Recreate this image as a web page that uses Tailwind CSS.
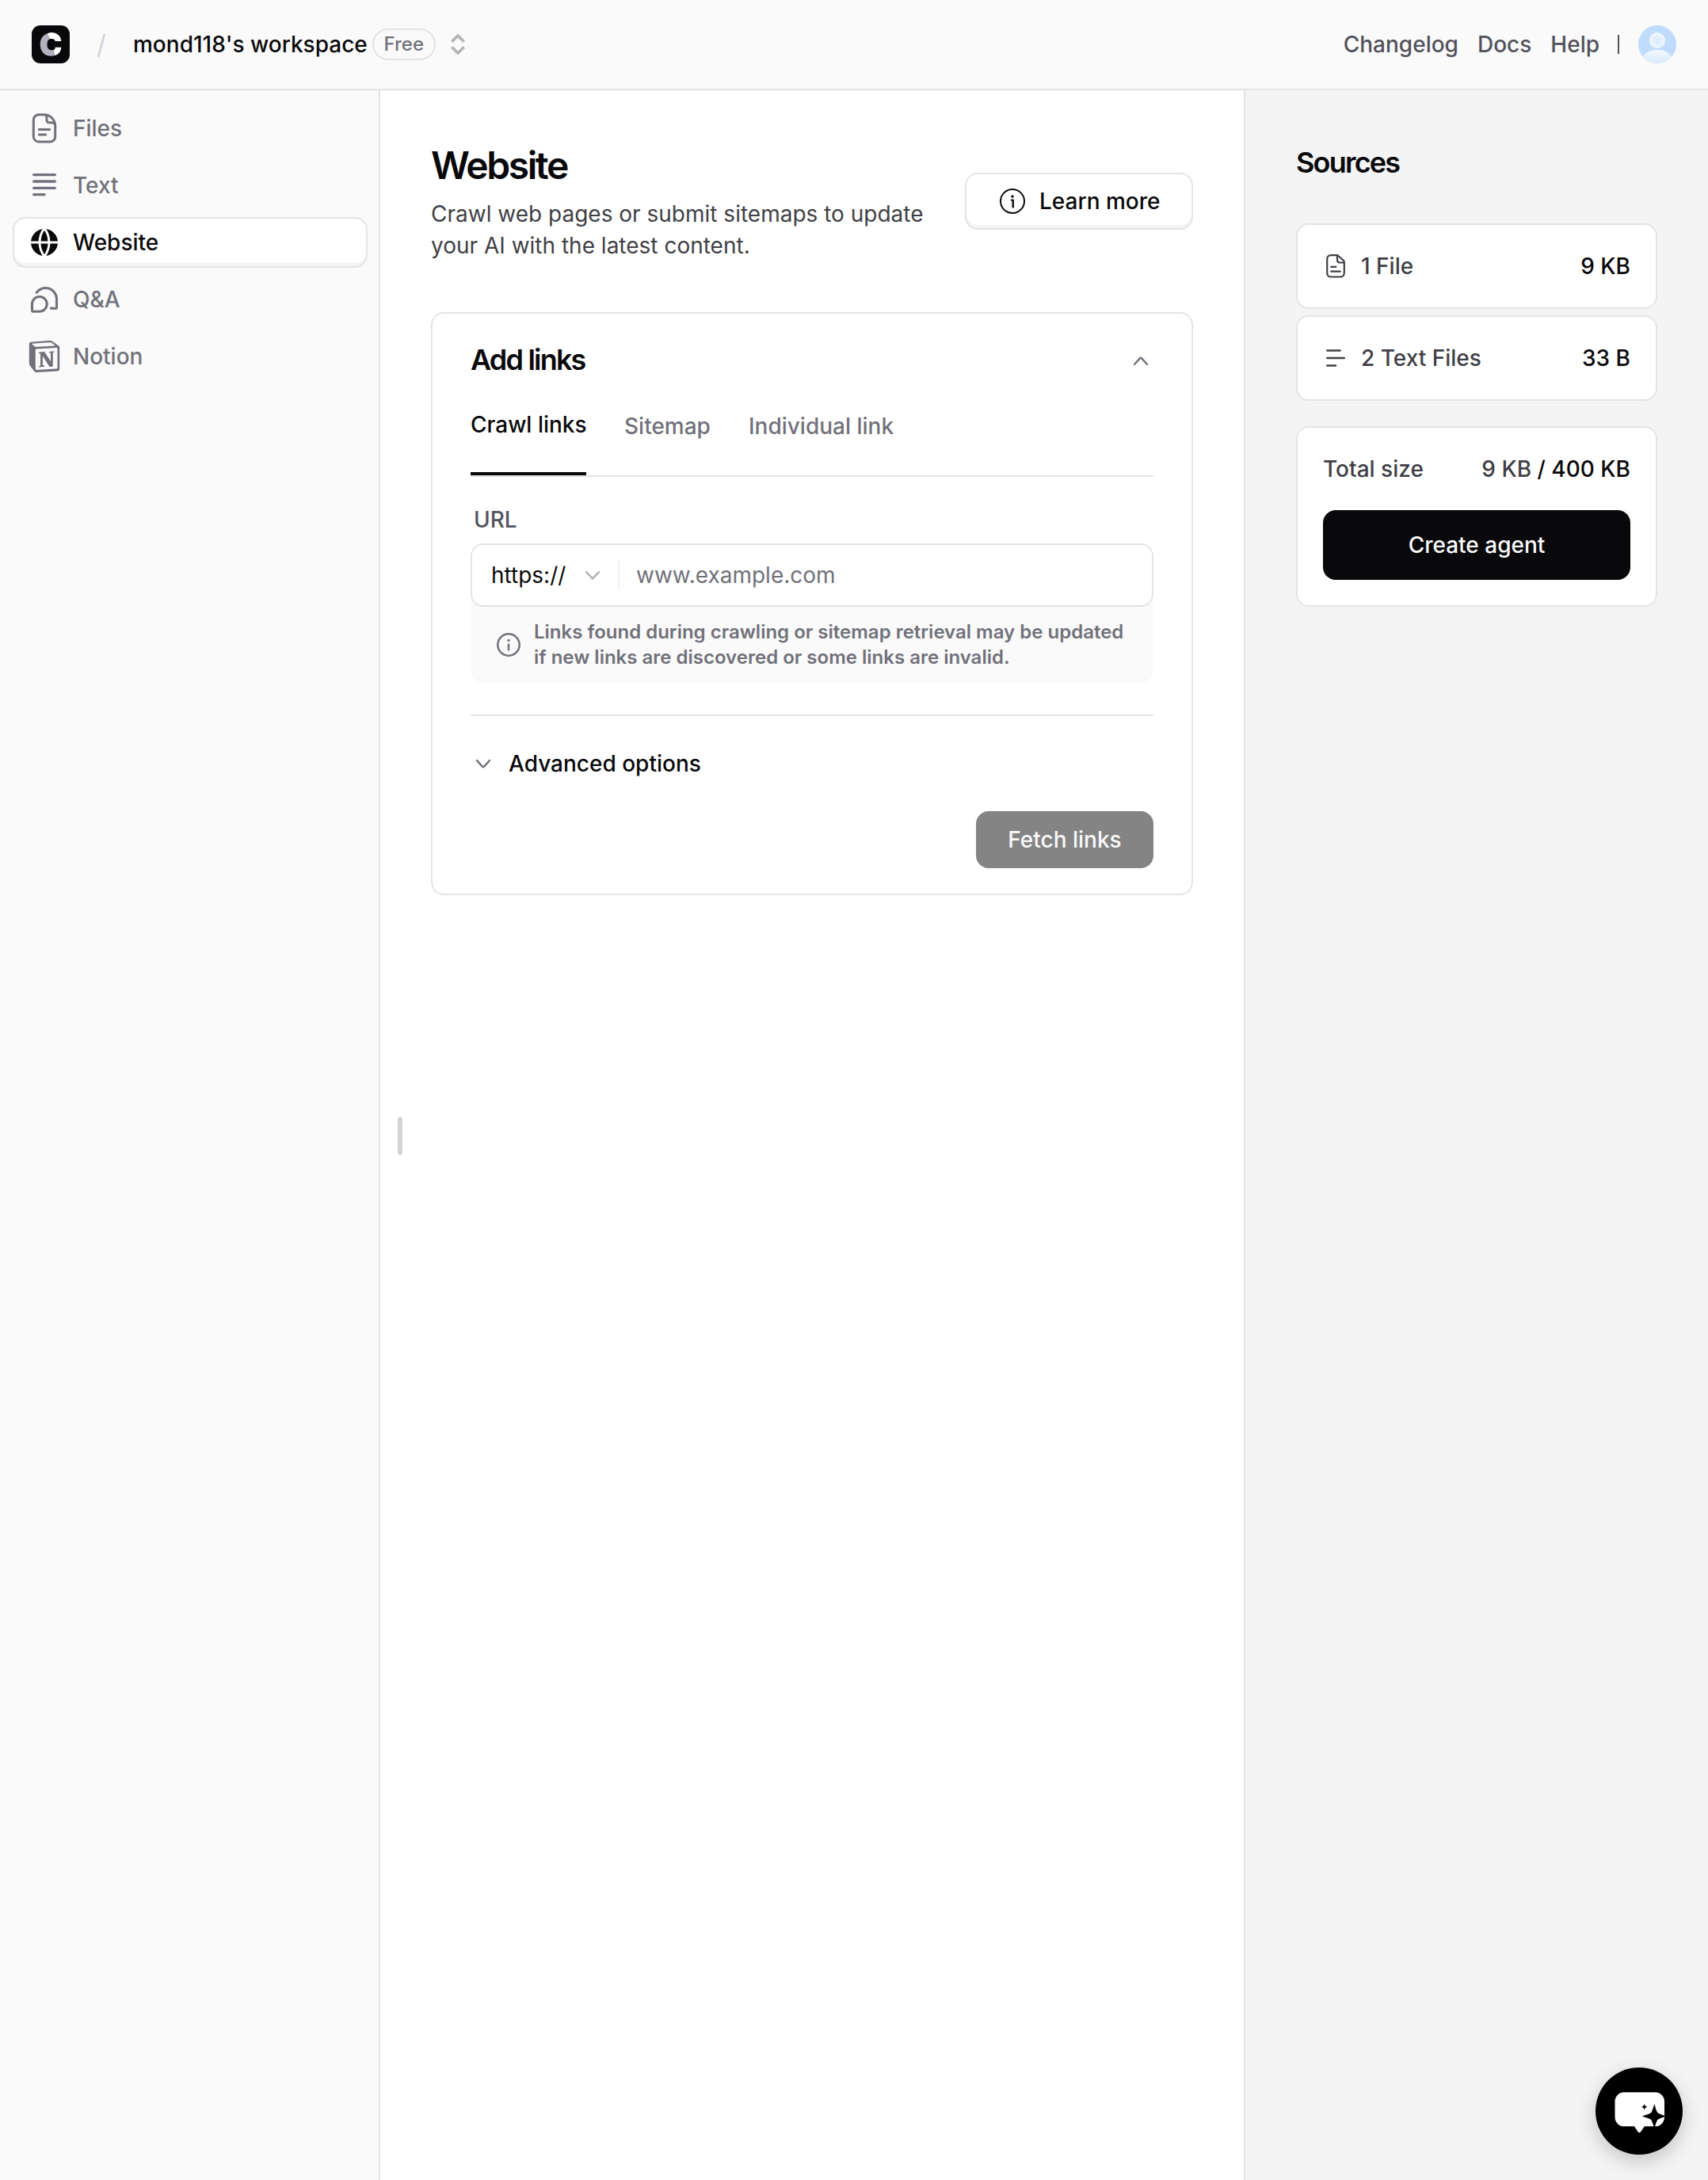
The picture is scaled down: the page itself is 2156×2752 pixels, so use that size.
<!DOCTYPE html>
<html lang="en">
<head>
<meta charset="utf-8">
<title>Website sources</title>
<script src="https://cdn.jsdelivr.net/npm/@tailwindcss/browser@4"></script>
</head>
<body class="flex min-h-screen flex-col bg-white font-['Inter',sans-serif] text-[28px] leading-[40px] font-medium text-[#09090b]">

<header class="flex h-[114px] items-center justify-between border-b-2 border-[#e4e4e5] bg-[#fafafa] px-10">
  <div class="flex items-center">
    <svg class="size-12" viewBox="0 0 48 48">
      <rect width="48" height="48" rx="11" fill="#09090b"/>
      <path fill="#fff" d="M37.3 20C36.8 13 31.8 9 25 9C23 9 21 9.6 19.5 10.5L23 17.2C26.5 16.4 29.3 17.3 29.7 20ZM37.3 27.7H29.7C29.6 29.8 28.8 30.8 27.3 31.2L29 38C34 37 37 33 37.3 27.7Z"/>
      <path fill="#b4b0bd" d="M19.5 10.5C13 13 10.7 18 10.7 24C10.7 33 16 38.7 24.5 38.7C26 38.7 27.6 38.5 29 38L27.3 31.2C22 32 19.5 29.5 19.5 24C19.5 20 20.5 18 23 17.2Z"/>
    </svg>
    <span class="ml-[34px] w-[46px] text-[33px] font-normal text-[#d4d4d8]">/</span>
    <span class="whitespace-nowrap">mond118's workspace</span>
    <span class="ml-1.5 flex h-10 w-20 items-center justify-center rounded-full border-2 border-[#e4e4e5] text-[24px] text-[#71717a]">Free</span>
    <svg class="ml-3 size-8" viewBox="0 0 32 32" fill="none" stroke="#b5b5b9" stroke-width="3.6"><path d="M8.3 12.6L16 5L23.7 12.6M8.3 19.4L16 27L23.7 19.4"/></svg>
  </div>
  <nav class="flex items-center text-[#52525b]">
    <div class="mr-[23px] flex gap-6"><a>Changelog</a><a>Docs</a><a>Help</a></div>
    <span class="mr-6 h-6 w-0.5 bg-[#52525b]"></span>
    <svg class="size-12" viewBox="0 0 48 48">
      <defs>
        <clipPath id="av"><circle cx="24" cy="24" r="24"/></clipPath>
        <linearGradient id="avb" x1="0" y1="0" x2="0" y2="1"><stop offset="0" stop-color="#f3faff"/><stop offset="1" stop-color="#c6dbfa"/></linearGradient>
        <radialGradient id="avh"><stop offset=".4" stop-color="#dfeefe"/><stop offset="1" stop-color="#f2f9ff"/></radialGradient>
      </defs>
      <g clip-path="url(#av)"><rect width="48" height="48" fill="#bfdbfe"/><ellipse cx="24" cy="46" rx="20" ry="15.3" fill="url(#avb)"/><circle cx="24" cy="19" r="10" fill="url(#avh)"/></g>
    </svg>
  </nav>
</header>

<div class="flex flex-1">
  <aside class="flex w-[480px] flex-col gap-2 border-r-2 border-[#e4e4e5] bg-[#fafafa] p-4 pr-3.5 text-[#71717a]">
    <a class="flex h-16 items-center gap-4 px-5">
      <svg class="size-10" viewBox="0 0 40 40" fill="none" stroke="currentColor" stroke-width="3" stroke-linecap="round" stroke-linejoin="round"><path d="M13 2.7H20C27.5 2.7 33.7 9.5 33.7 17V30.5A6.5 6.5 0 0 1 27.2 37H13A6.7 6.7 0 0 1 6.3 30.3V9.4A6.7 6.7 0 0 1 13 2.7ZM21.5 3.2C22.9 4.3 23 5.8 23 7.5V10A2.8 2.8 0 0 0 25.8 12.8H28C30.5 12.8 32.3 13.2 33.2 14.8M13.3 21.4H26.7M13.3 28H21.7"/></svg>
      Files
    </a>
    <a class="flex h-16 items-center gap-4 px-5">
      <svg class="size-10" viewBox="0 0 40 40" fill="none" stroke="currentColor" stroke-width="3.3" stroke-linecap="round"><path d="M6.7 6.7H33.3M6.7 15H33.3M6.7 23.4H33.3M6.7 31.7H20"/></svg>
      Text
    </a>
    <a class="flex h-16 items-center gap-4 rounded-2xl border-2 border-[#e4e4e5] bg-white px-[18px] text-[#09090b] shadow-[inset_0_-4px_0_0_#f4f4f5]">
      <svg class="size-10" viewBox="0 0 40 40" fill="none"><circle cx="20" cy="20" r="17" fill="#09090b"/><path d="M20 2.2C12 13 12 27 20 37.8C28 27 28 13 20 2.2ZM2 20H38" stroke="#fff" stroke-width="2.9"/></svg>
      Website
    </a>
    <a class="flex h-16 items-center gap-4 px-5">
      <svg class="size-10" viewBox="0 0 40 40" fill="none" stroke="currentColor" stroke-width="3.1" stroke-linecap="round" stroke-linejoin="round"><path d="M13.9 16.5A9.3 9.3 0 0 1 13.9 35.2H6A1.5 1.5 0 0 1 4.5 33.7V25.9A9.4 9.4 0 0 1 13.9 16.5ZM10.2 11.3A14 14 0 0 1 35.5 18.6V30A1.5 1.5 0 0 1 34 31.5L28.4 31.1"/></svg>
      Q&amp;A
    </a>
    <a class="flex h-16 items-center gap-4 px-5">
      <svg class="size-10" viewBox="0 0 24 24" fill="currentColor"><path d="M4.459 4.208c.746.606 1.026.56 2.428.466l13.215-.793c.28 0 .047-.28-.046-.326L17.86 1.968c-.42-.326-.981-.7-2.055-.607L3.01 2.295c-.466.046-.56.28-.374.466zm.793 3.08v13.904c0 .747.373 1.027 1.214.98l14.523-.84c.841-.046.935-.56.935-1.167V6.354c0-.606-.233-.933-.748-.887l-15.177.887c-.56.047-.747.327-.747.933zm14.337.745c.093.42 0 .84-.42.888l-.7.14v10.264c-.608.327-1.168.514-1.635.514-.748 0-.935-.234-1.495-.933l-4.577-7.186v6.952L12.21 19s0 .84-1.168.84l-3.222.186c-.093-.186 0-.653.327-.746l.84-.233V9.854L7.822 9.76c-.094-.42.14-1.026.793-1.073l3.456-.233 4.764 7.279v-6.44l-1.215-.139c-.093-.514.28-.887.747-.933zM1.936 1.035l13.31-.98c1.634-.14 2.055-.047 3.082.7l4.249 2.986c.7.513.934.653.934 1.213v16.378c0 1.026-.373 1.634-1.68 1.726l-15.458.934c-.98.047-1.448-.093-1.962-.747l-3.129-4.06c-.56-.747-.793-1.306-.793-1.96V2.667c0-.839.374-1.54 1.447-1.632z"/></svg>
      Notion
    </a>
  </aside>

  <main class="relative w-[1092px] border-r-2 border-[#e4e4e5] p-16">
    <!-- sidebar resize handle -->
    <span class="absolute top-[1296px] left-[22px] h-12 w-1.5 rounded-full bg-[#d4d4d8]"></span>

    <div class="flex items-center justify-between">
      <div>
        <h1 class="text-[48px] leading-[62px] font-semibold tracking-tighter">Website</h1>
        <p class="mt-2.5 w-[640px] font-normal text-[#3f3f46]">Crawl web pages or submit sitemaps to update your AI with the latest content.</p>
      </div>
      <button class="flex h-[72px] w-[288px] items-center gap-4 rounded-2xl border-2 border-[#e4e4e5] bg-white pl-10 whitespace-nowrap shadow-[inset_0_-4px_0_0_#f4f4f5]">
        <svg class="size-9" viewBox="0 0 36 36" fill="none" stroke="currentColor" stroke-width="2"><circle cx="18" cy="18" r="15"/><circle cx="18" cy="12" r="1.8" fill="currentColor" stroke="none"/><path d="M17 16.6H18.7V25.4" stroke-width="2.4" stroke-linecap="round" stroke-linejoin="round"/></svg>
        Learn more
      </button>
    </div>

    <section class="mt-16 flex flex-col rounded-2xl border-2 border-[#e4e4e5] px-12 pb-8">
      <div class="flex h-20 items-end justify-between">
        <h2 class="text-[36px] leading-[44px] font-semibold tracking-tighter">Add links</h2>
        <svg class="mb-1 size-8" viewBox="0 0 32 32" fill="none" stroke="#71717a" stroke-width="2.4" stroke-linecap="round"><path d="M8 20L14.8 12.4Q16 11.1 17.2 12.4L24 20"/></svg>
      </div>
      <div class="flex h-[126px] gap-12 border-b-2 border-[#e4e4e5] text-[#71717a]">
        <a class="flex w-[146px] items-center border-b-4 border-[#09090b] whitespace-nowrap text-[#09090b]">Crawl links</a>
        <a class="flex items-center">Sitemap</a>
        <a class="flex items-center">Individual link</a>
      </div>
      <label class="mt-[34px] pl-1 text-[#52525b]">URL</label>
      <div class="relative mt-2.5 flex h-20 items-center rounded-2xl border-2 border-[#e4e4e5] bg-white pl-6 font-normal">
        <span class="w-[112px]">https://</span>
        <svg class="size-8" viewBox="0 0 32 32" fill="none" stroke="#b5b5b9" stroke-width="2.6" stroke-linecap="round"><path d="M8 12.2L16 20.4L24 12.2"/></svg>
        <span class="ml-4 h-[38px] w-0.5 bg-[#f0f0f1]"></span>
        <input class="min-w-0 flex-1 bg-transparent pl-[21px] outline-none placeholder:text-[#71717a]" placeholder="www.example.com">
      </div>
      <div class="-mt-4 flex gap-3.5 rounded-2xl bg-[#fafafa] px-[30px] pt-8 pb-4 text-[24px] leading-8 font-semibold text-[#71717a]">
        <svg class="mt-3.5 size-9 shrink-0" viewBox="0 0 36 36" fill="none" stroke="currentColor" stroke-width="2.5"><circle cx="18" cy="18" r="13.7"/><circle cx="18" cy="12.4" r="1.7" fill="currentColor" stroke="none"/><path d="M18 17.4V24.2" stroke-linecap="round"/></svg>
        <p class="w-[750px]">Links found during crawling or sitemap retrieval may be updated if new links are discovered or some links are invalid.</p>
      </div>
      <div class="mt-10 h-0.5 bg-[#e4e4e5]"></div>
      <div class="mt-10 flex items-center gap-4">
        <svg class="size-8" viewBox="0 0 32 32" fill="none" stroke="#71717a" stroke-width="2.4" stroke-linecap="round"><path d="M8 12L14.8 19.6Q16 20.9 17.2 19.6L24 12"/></svg>
        Advanced options
      </div>
      <button class="mt-10 h-[72px] w-[224px] self-end rounded-2xl bg-[#848484] text-[#fafafa]">Fetch links</button>
    </section>
  </main>

  <aside class="flex-1 bg-[#f4f4f4] p-16 text-[#3f3f46]">
    <h2 class="text-[36px] leading-[54px] font-semibold tracking-tighter text-[#09090b]">Sources</h2>
    <div class="mt-[50px] flex h-[108px] items-center gap-4 rounded-2xl border-2 border-[#e4e4e5] bg-white px-8">
      <svg class="size-8" viewBox="0 0 32 32" fill="none" stroke="currentColor" stroke-width="2.2" stroke-linecap="round" stroke-linejoin="round"><path d="M10.5 2.2H17.6Q18.6 2.2 19.4 3L26 9Q26.8 9.8 26.8 11V24C26.8 28 25.5 29.5 21.5 29.5H10.5C6.5 29.5 5.2 28 5.2 24V7.7C5.2 3.7 6.5 2.2 10.5 2.2ZM18 3V8C18 10.5 19 11.5 21.5 11.5H26.3M10.2 16.8H16.4M10.2 22.6H21.8"/></svg>
      <span class="flex-1">1 File</span>
      <span class="text-[#09090b]">9 KB</span>
    </div>
    <div class="mt-2 flex h-[108px] items-center gap-4 rounded-2xl border-2 border-[#e4e4e5] bg-white px-8">
      <svg class="size-8" viewBox="0 0 32 32" fill="none" stroke="currentColor" stroke-width="2.5" stroke-linecap="round"><path d="M5.3 6.6H21.6M5.3 16H26.8M5.3 25.4H16"/></svg>
      <span class="flex-1">2 Text Files</span>
      <span class="text-[#09090b]">33 B</span>
    </div>
    <div class="mt-8 rounded-2xl border-2 border-[#e4e4e5] bg-white p-8">
      <div class="flex justify-between"><span>Total size</span><span class="text-[#09090b]"><span class="text-[#3f3f46]">9 KB</span> / 400 KB</span></div>
      <button class="mt-8 h-[88px] w-full rounded-2xl bg-[#09090b] text-[#fafafa]">Create agent</button>
    </div>
  </aside>
</div>

<button class="fixed right-8 bottom-8 size-[110px] rounded-full bg-black shadow-[0_8px_24px_rgba(0,0,0,0.2)]">
  <svg class="size-[110px]" viewBox="0 0 110 110"><path fill="#fff" d="M36 31.3H75.5A11.5 11.5 0 0 1 87 42.8V62.8A11.5 11.5 0 0 1 75.5 74.3H61.8L57 81.2Q55.3 83.2 53.6 81.2L49 74.3H36A11.5 11.5 0 0 1 24.5 62.8V42.8A11.5 11.5 0 0 1 36 31.3Z"/><path d="M74.3 46C76 51 76.5 54 78.3 57C81 59 84 59.8 89 61.5C84 63.2 81 64 78.3 66C76.5 69 76 72 74.3 77C72.6 72 72 69 70.3 66C67.5 64 64 63.2 58.8 61.5C64 59.8 67.5 59 70.3 57C72 54 72.6 51 74.3 46ZM61.7 45.7Q62.3 49.2 65.5 49.7Q62.3 50.2 61.7 53.7Q61.1 50.2 58 49.7Q61.1 49.2 61.7 45.7Z"/></svg>
</button>
</body>
</html>
